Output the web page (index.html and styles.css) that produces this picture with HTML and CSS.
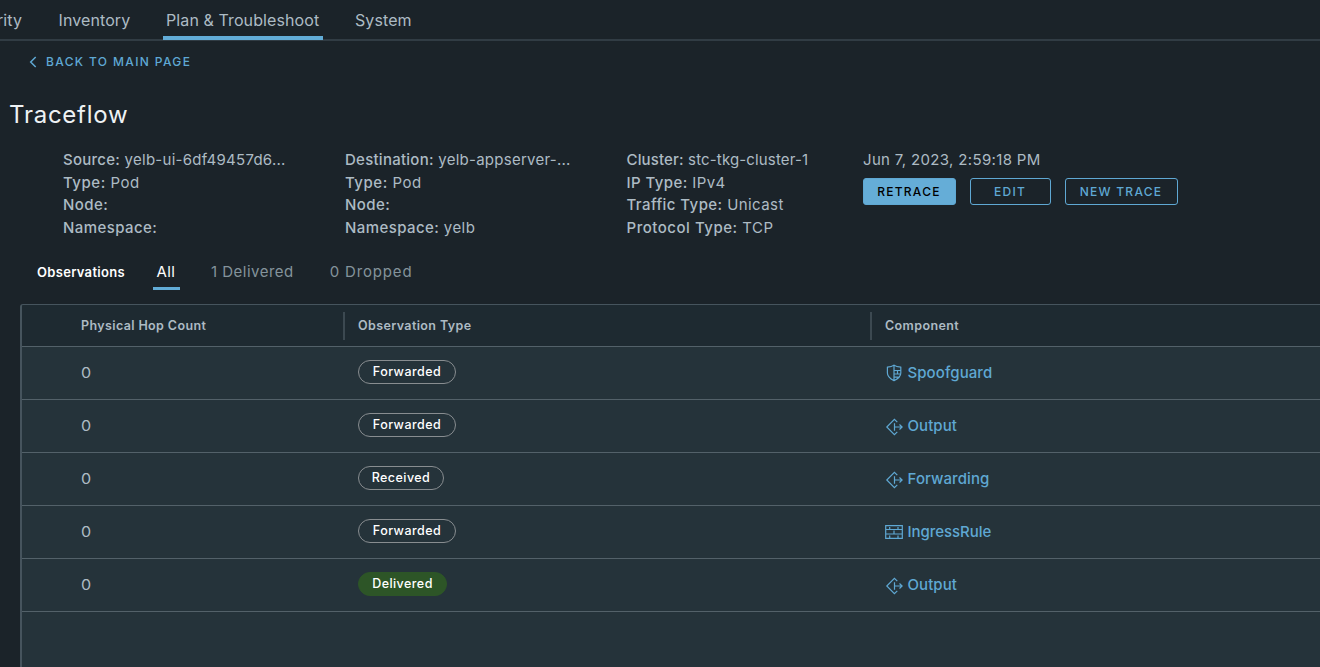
FILE: index.html
```html
<!DOCTYPE html>
<html lang="en">
<head>
<meta charset="utf-8">
<title>Traceflow</title>
<link rel="stylesheet" href="styles.css">
</head>
<body>
<svg class="defs" width="0" height="0" aria-hidden="true">
  <symbol id="forward" viewBox="0 0 18 18"><path d="M12.300 4.200 9.400 1.300 1.800 9l7.600 7.700 2.900-2.900M9.500 5.200v7.600M9.500 9h7.500M14.500 6.500 17.100 9l-2.600 2.500"/></symbol>
  <symbol id="shield" viewBox="0 0 18 18"><path d="M9 1.100C7.200 2.500 4.800 3 2.400 3.200V9c0 3.800 3.500 6.200 6.600 7.700C12.200 15.200 15.800 12.800 15.800 9V3.200C13.300 3 10.800 2.500 9 1.100ZM9 1.100v15.600M9 6.500h6.800M9 10h6.800M9 13.200h4.400M12.500 6.500V10"/></symbol>
  <symbol id="firewall" viewBox="0 0 18 18"><path d="M.7 2.700h16.600v12.600H.700ZM.700 6.500h16.600M.700 11h16.600M4.700 4v2.500M13 4v2.500M9 7.500V11M4.700 12.500v2.500M13 12.500v2.500"/></symbol>
</svg>
<div class="page">
  <nav class="nav">
    <a class="nav-item nav-cut">rity</a>
    <a class="nav-item nav-inventory">Inventory</a>
    <a class="nav-item nav-plan active">Plan &amp; Troubleshoot</a>
    <a class="nav-item nav-system">System</a>
  </nav>
  <a class="back"><svg width="8" height="12" viewBox="0 0 8 12"><path d="M6.700 1 1.700 6l5 5"/></svg><span>BACK TO MAIN PAGE</span></a>
  <h1 class="title">Traceflow</h1>
  <section class="info">
    <div class="info-col">
      <div class="long"><b>Source:</b> yelb-ui-6df49457d6...</div><div class="wide"><b>Type:</b> Pod</div><div><b>Node:</b></div><div><b>Namespace:</b></div>
    </div>
    <div class="info-col">
      <div class="long"><b>Destination:</b> yelb-appserver-...</div><div class="wide"><b>Type:</b> Pod</div><div><b>Node:</b></div><div><b>Namespace:</b> yelb</div>
    </div>
    <div class="info-col">
      <div class="cluster"><b>Cluster:</b> stc-tkg-cluster-1</div><div><b>IP Type:</b> IPv4</div><div><b>Traffic Type:</b> Unicast</div><div class="wide"><b>Protocol Type:</b> TCP</div>
    </div>
    <div class="actions">
      <div class="date">Jun 7, 2023, 2:59:18 PM</div>
      <div class="buttons"><button class="btn primary">RETRACE</button><button class="btn edit">EDIT</button><button class="btn new">NEW TRACE</button></div>
    </div>
  </section>
  <div class="tabs">
    <strong class="tabs-label">Observations</strong>
    <a class="tab selected">All</a>
    <a class="tab delivered-tab">1 Delivered</a>
    <a class="tab dropped-tab">0 Dropped</a>
  </div>
  <div class="grid">
    <div class="row head"><div>Physical Hop Count</div><div class="split">Observation Type</div><div class="split">Component</div></div>
    <div class="row"><div><span class="count">0</span></div><div><span class="pill forwarded">Forwarded</span></div><div class="link"><svg><use href="#shield"/></svg><span>Spoofguard</span></div></div>
    <div class="row"><div><span class="count">0</span></div><div><span class="pill forwarded">Forwarded</span></div><div class="link"><svg class="low"><use href="#forward"/></svg><span>Output</span></div></div>
    <div class="row"><div><span class="count">0</span></div><div><span class="pill received">Received</span></div><div class="link"><svg class="low"><use href="#forward"/></svg><span>Forwarding</span></div></div>
    <div class="row"><div><span class="count">0</span></div><div><span class="pill forwarded">Forwarded</span></div><div class="link"><svg><use href="#firewall"/></svg><span class="ingress">IngressRule</span></div></div>
    <div class="row"><div><span class="count">0</span></div><div><span class="pill delivered">Delivered</span></div><div class="link"><svg class="low"><use href="#forward"/></svg><span>Output</span></div></div>
  </div>
</div>
</body>
</html>
```
FILE: styles.css
```css
* { box-sizing: border-box; }
body { margin: 0; background: #1b2329; color: #adbbc4; font: 15px/22.5px Inter, "Liberation Sans", sans-serif; overflow: hidden; }
b { font-weight: 500; }
.defs { display: block; }
svg { fill: none; stroke: #5fa8d3; stroke-width: 1.200; }
.page { height: 667px; display: flex; flex-direction: column; }
.nav { height: 41px; flex: none; display: flex; border-bottom: 2px solid #313c44; font-size: 16px; line-height: 41px; white-space: nowrap; letter-spacing: .1px; }
.nav-item { height: 40px; flex: none; }
.nav-cut { width: 55px; margin-left: -3px; }
.nav-inventory { width: 111px; padding-left: 6.500px; }
.nav-plan { width: 160px; padding-left: 3px; }
.nav-system { padding-left: 32px; }
.active { border-bottom: 4px solid #62acd7; }
.back { display: flex; align-items: center; gap: 9px; height: 20px; margin: 11px 0 0 29px; color: #5fa8d3; font-size: 12px; font-weight: 500; letter-spacing: 1.360px; }
.back svg { stroke-width: 1.500; }
.title { margin: 25px 0 0 9px; height: 36px; font-size: 24px; line-height: 36px; font-weight: 370; letter-spacing: .75px; color: #eef2f4; }
.info { display: grid; grid-template-columns: 282px 281.500px 236.500px 1fr; margin: 16px 0 0 63px; height: 92px; white-space: nowrap; letter-spacing: .42px; }
.long { letter-spacing: .26px; }
.wide { letter-spacing: .52px; }
.cluster { letter-spacing: .15px; }
.date { letter-spacing: .34px; }
.buttons { display: flex; gap: 14px; margin-top: 6px; }
.btn { height: 27px; padding: 0 1px 0 0; border: 1px solid #5fa8d3; border-radius: 3px; background: none; color: #5fa8d3; font: 500 12px/25px Inter, sans-serif; letter-spacing: 1.250px; }
.primary { width: 93px; background: #65add7; color: #000; }
.edit { width: 81px; }
.new { width: 113px; }
.tabs { display: flex; height: 31px; margin: 18px 0 0 37px; line-height: 26px; color: #84939b; }
.tabs-label { width: 115.500px; color: #fff; font-size: 13px; font-weight: 600; letter-spacing: .3px; }
.tab { margin-right: 36px; }
.selected { width: 27px; margin-right: 31.500px; padding-left: 4px; border-bottom: 3px solid #62acd7; color: #fff; letter-spacing: .4px; }
.delivered-tab { letter-spacing: .48px; }
.dropped-tab { letter-spacing: .85px; }
.grid { flex: 1; margin: 14px 0 0 20px; border: solid #46545d; border-width: 1px 0 0 2px; border-top-left-radius: 3px; background: #25333a; overflow: hidden; }
.row { display: grid; grid-template-columns: 321px 527px 1fr; height: 53px; align-items: center; border-bottom: 1px solid #536169; }
.row > div { padding-left: 15px; }
.row > div:first-child { padding-left: 59px; }
.row.head { height: 42px; background: #1e2a31; font-size: 12.500px; font-weight: 600; letter-spacing: .38px; }
.split { border-left: 2px solid #3c4951; height: 28px; line-height: 27px; }
.row.head .split { padding-left: 13px; }
.row.head > div:first-child { height: 28px; line-height: 27px; }
.count { display: inline-block; font-size: 14px; transform: scaleX(1.15); transform-origin: left; }
.pill { display: flex; align-items: center; justify-content: center; width: 98px; height: 24px; margin-top: -2px; border: 1px solid #888d90; border-radius: 12px; color: #fff; font-size: 12.500px; font-weight: 500; letter-spacing: .45px; }
.received { width: 86px; }
.delivered { width: 89px; border-color: #2d5527; background: #2d5527; }
.row .link { display: flex; align-items: center; gap: 4.500px; color: #5fa8d3; font-weight: 500; letter-spacing: .08px; }
.link .ingress { letter-spacing: -.05px; }
.link svg { width: 18px; height: 18px; }
.low { position: relative; top: 1px; }
```
